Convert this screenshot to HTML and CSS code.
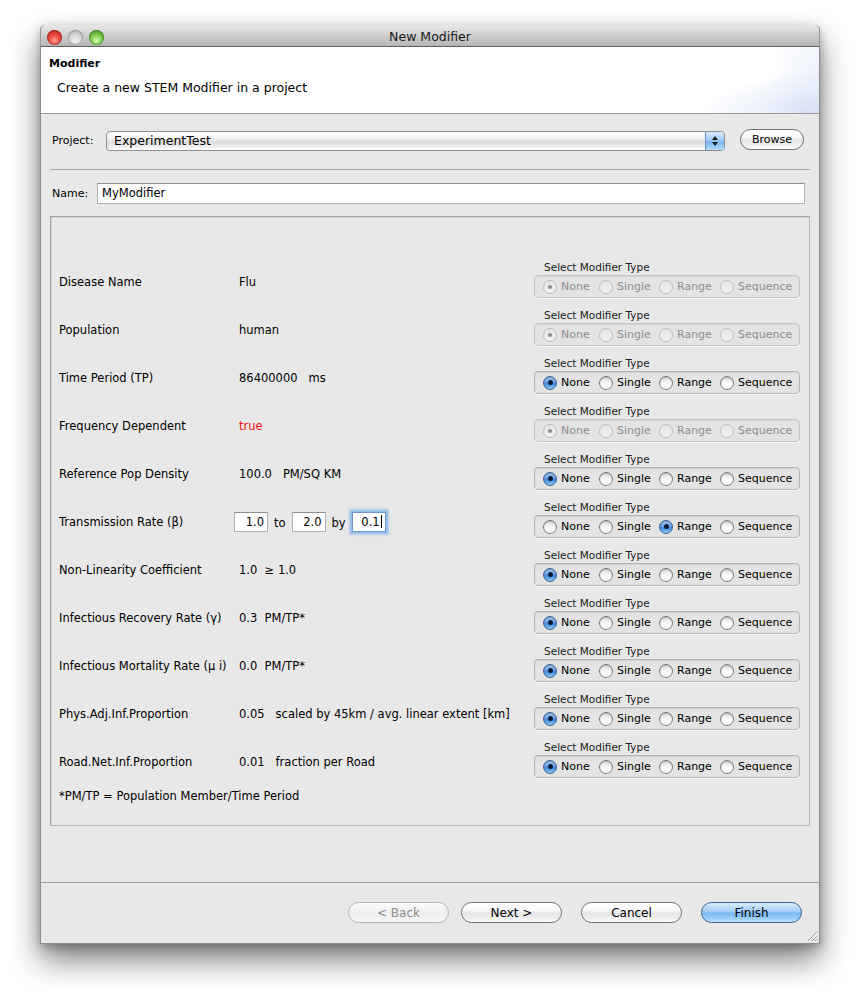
FILE: index.html
```html
<!DOCTYPE html>
<html>
<head>
<meta charset="utf-8">
<title>New Modifier</title>
<link rel="stylesheet" href="styles.css">
</head>
<body>
<div class="window">
  <div class="titlebar">
    <div class="lights">
      <span class="light red"></span><span class="light gray"></span><span class="light green"></span>
    </div>
    <div class="title">New Modifier</div>
    <div></div>
  </div>
  <div class="header">
    <div class="h-title">Modifier</div>
    <div class="h-desc">Create a new STEM Modifier in a project</div>
  </div>
  <div class="body">
    <div class="project-row">
      <span class="lbl proj-lbl">Project:</span>
      <div class="combo">
        <span class="combo-text">ExperimentTest</span>
        <span class="stepper">
          <svg width="8" height="12" viewBox="0 0 8 12"><path d="M4 1 L7 5 L1 5 Z" fill="#1a1a1a"/><path d="M4 11 L7 7 L1 7 Z" fill="#1a1a1a"/></svg>
        </span>
      </div>
      <span class="btn browse">Browse</span>
    </div>
    <div class="sep"></div>
    <div class="name-row">
      <span class="lbl name-lbl">Name:</span>
      <div class="field">MyModifier</div>
    </div>
    <div class="group">
      <div class="row">
        <div class="cell">Disease Name</div>
        <div class="cell val">Flu</div>
        <div class="rcell">
          <div class="rlabel">Select Modifier Type</div>
          <div class="rbox disabled">
            <span class="ritem w1"><span class="radio on"></span>None</span>
            <span class="ritem w2"><span class="radio"></span>Single</span>
            <span class="ritem w3"><span class="radio"></span>Range</span>
            <span class="ritem"><span class="radio"></span>Sequence</span>
          </div>
        </div>
      </div>
      <div class="row">
        <div class="cell">Population</div>
        <div class="cell val">human</div>
        <div class="rcell">
          <div class="rlabel">Select Modifier Type</div>
          <div class="rbox disabled">
            <span class="ritem w1"><span class="radio on"></span>None</span>
            <span class="ritem w2"><span class="radio"></span>Single</span>
            <span class="ritem w3"><span class="radio"></span>Range</span>
            <span class="ritem"><span class="radio"></span>Sequence</span>
          </div>
        </div>
      </div>
      <div class="row">
        <div class="cell">Time Period (TP)</div>
        <div class="cell val">86400000   ms</div>
        <div class="rcell">
          <div class="rlabel">Select Modifier Type</div>
          <div class="rbox">
            <span class="ritem w1"><span class="radio on"></span>None</span>
            <span class="ritem w2"><span class="radio"></span>Single</span>
            <span class="ritem w3"><span class="radio"></span>Range</span>
            <span class="ritem"><span class="radio"></span>Sequence</span>
          </div>
        </div>
      </div>
      <div class="row">
        <div class="cell">Frequency Dependent</div>
        <div class="cell val red">true</div>
        <div class="rcell">
          <div class="rlabel">Select Modifier Type</div>
          <div class="rbox disabled">
            <span class="ritem w1"><span class="radio on"></span>None</span>
            <span class="ritem w2"><span class="radio"></span>Single</span>
            <span class="ritem w3"><span class="radio"></span>Range</span>
            <span class="ritem"><span class="radio"></span>Sequence</span>
          </div>
        </div>
      </div>
      <div class="row">
        <div class="cell">Reference Pop Density</div>
        <div class="cell val">100.0   PM/SQ KM</div>
        <div class="rcell">
          <div class="rlabel">Select Modifier Type</div>
          <div class="rbox">
            <span class="ritem w1"><span class="radio on"></span>None</span>
            <span class="ritem w2"><span class="radio"></span>Single</span>
            <span class="ritem w3"><span class="radio"></span>Range</span>
            <span class="ritem"><span class="radio"></span>Sequence</span>
          </div>
        </div>
      </div>
      <div class="row">
        <div class="cell">Transmission Rate (β)</div>
        <div class="cell val inputs">
          <span class="num">1.0</span><span class="word">to</span><span class="num">2.0</span><span class="word">by</span><span class="num focus">0.1<span class="caret"></span></span>
        </div>
        <div class="rcell">
          <div class="rlabel">Select Modifier Type</div>
          <div class="rbox">
            <span class="ritem w1"><span class="radio"></span>None</span>
            <span class="ritem w2"><span class="radio"></span>Single</span>
            <span class="ritem w3"><span class="radio on"></span>Range</span>
            <span class="ritem"><span class="radio"></span>Sequence</span>
          </div>
        </div>
      </div>
      <div class="row">
        <div class="cell">Non-Linearity Coefficient</div>
        <div class="cell val">1.0  ≥ 1.0</div>
        <div class="rcell">
          <div class="rlabel">Select Modifier Type</div>
          <div class="rbox">
            <span class="ritem w1"><span class="radio on"></span>None</span>
            <span class="ritem w2"><span class="radio"></span>Single</span>
            <span class="ritem w3"><span class="radio"></span>Range</span>
            <span class="ritem"><span class="radio"></span>Sequence</span>
          </div>
        </div>
      </div>
      <div class="row">
        <div class="cell">Infectious Recovery Rate (γ)</div>
        <div class="cell val">0.3  PM/TP*</div>
        <div class="rcell">
          <div class="rlabel">Select Modifier Type</div>
          <div class="rbox">
            <span class="ritem w1"><span class="radio on"></span>None</span>
            <span class="ritem w2"><span class="radio"></span>Single</span>
            <span class="ritem w3"><span class="radio"></span>Range</span>
            <span class="ritem"><span class="radio"></span>Sequence</span>
          </div>
        </div>
      </div>
      <div class="row">
        <div class="cell">Infectious Mortality Rate (μ i)</div>
        <div class="cell val">0.0  PM/TP*</div>
        <div class="rcell">
          <div class="rlabel">Select Modifier Type</div>
          <div class="rbox">
            <span class="ritem w1"><span class="radio on"></span>None</span>
            <span class="ritem w2"><span class="radio"></span>Single</span>
            <span class="ritem w3"><span class="radio"></span>Range</span>
            <span class="ritem"><span class="radio"></span>Sequence</span>
          </div>
        </div>
      </div>
      <div class="row">
        <div class="cell">Phys.Adj.Inf.Proportion</div>
        <div class="cell val">0.05   scaled by 45km / avg. linear extent [km]</div>
        <div class="rcell">
          <div class="rlabel">Select Modifier Type</div>
          <div class="rbox">
            <span class="ritem w1"><span class="radio on"></span>None</span>
            <span class="ritem w2"><span class="radio"></span>Single</span>
            <span class="ritem w3"><span class="radio"></span>Range</span>
            <span class="ritem"><span class="radio"></span>Sequence</span>
          </div>
        </div>
      </div>
      <div class="row">
        <div class="cell">Road.Net.Inf.Proportion</div>
        <div class="cell val">0.01   fraction per Road</div>
        <div class="rcell">
          <div class="rlabel">Select Modifier Type</div>
          <div class="rbox">
            <span class="ritem w1"><span class="radio on"></span>None</span>
            <span class="ritem w2"><span class="radio"></span>Single</span>
            <span class="ritem w3"><span class="radio"></span>Range</span>
            <span class="ritem"><span class="radio"></span>Sequence</span>
          </div>
        </div>
      </div>
      <div class="footnote">*PM/TP = Population Member/Time Period</div>
    </div>
  </div>
  <div class="footer">
    <span class="btn fbtn disabled-btn">&lt; Back</span>
    <span class="btn fbtn next">Next &gt;</span>
    <span class="btn fbtn cancel">Cancel</span>
    <span class="btn fbtn finish">Finish</span>
  </div>
  <svg class="grip" width="11" height="11" viewBox="0 0 11 11">
    <path d="M10 1 L1 10 M10 5 L5 10 M10 8 L8 10" stroke="#9a9a9a" stroke-width="1" fill="none"/>
    <path d="M10 2 L2 10 M10 6 L6 10" stroke="#ffffff" stroke-width="1" fill="none" opacity="0.8"/>
  </svg>
</div>
</body>
</html>
```

FILE: styles.css
```css
* { box-sizing: border-box; }
html, body { margin: 0; padding: 0; background: #ffffff; }
body {
  font-family: "DejaVu Sans", "Liberation Sans", sans-serif;
  font-size: 11.5px;
  color: #000;
  min-height: 999px;
  padding: 25px 0 55px 40px;
}

.window {
  position: relative;
  width: 780px;
  height: 919px;
  border: 1px solid #8c8c8c;
  border-top: none;
  border-radius: 5px 5px 0 0;
  background: #e8e8e8;
  box-shadow: 0 16px 30px rgba(0,0,0,0.5), 0 3px 10px rgba(0,0,0,0.25);
  display: flex;
  flex-direction: column;
}

/* title bar */
.titlebar {
  height: 22px;
  flex-shrink: 0;
  display: grid;
  grid-template-columns: 1fr auto 1fr;
  align-items: center;
  border-radius: 5px 5px 0 0;
  background: linear-gradient(#e8e8e8, #c9c9c9 60%, #b5b5b5);
  border-bottom: 1px solid #5f5f5f;
  margin: 0 -1px;
  border-left: 1px solid #9a9a9a;
  border-right: 1px solid #9a9a9a;
}
.lights {
  display: flex;
  gap: 6px;
  padding-left: 6px;
  padding-top: 3px;
}
.light {
  width: 15px;
  height: 15px;
  border-radius: 50%;
  display: block;
}
.light.red {
  background: radial-gradient(circle at 50% 70%, #ff9a8f 0%, #e8453c 45%, #b51c12 100%);
  box-shadow: inset 0 0 0 1px rgba(120,20,10,0.45);
}
.light.gray {
  background: radial-gradient(circle at 50% 70%, #f2f2f2 0%, #d2d2d2 50%, #a9a9a9 100%);
  box-shadow: inset 0 0 0 1px rgba(0,0,0,0.22);
}
.light.green {
  background: radial-gradient(circle at 50% 70%, #d6ffb0 0%, #7cc84a 45%, #3f8a17 100%);
  box-shadow: inset 0 0 0 1px rgba(30,90,10,0.45);
}
.title {
  font-size: 12.5px;
  color: #1a1a1a;
  padding-top: 2px;
}

/* header */
.header {
  height: 67px;
  flex-shrink: 0;
  border-bottom: 1px solid #9a9a9a;
  background:
    radial-gradient(ellipse 150px 60px at 100% 110%, rgba(205,218,243,0.8), rgba(225,233,249,0.45) 55%, rgba(255,255,255,0) 80%),
    radial-gradient(ellipse 70px 120px at 100% 80%, rgba(215,226,246,0.6), rgba(255,255,255,0) 75%),
    #ffffff;
  padding: 10px 8px 0 8px;
}
.h-title {
  font-weight: bold;
  font-size: 11px;
  line-height: 14px;
}
.h-desc {
  font-size: 12.5px;
  line-height: 15px;
  margin-top: 9px;
  padding-left: 8px;
}

/* body */
.body {
  flex: 1;
  padding: 15px 9px 0 9px;
}
.lbl {
  font-size: 11px;
  line-height: 20px;
}
.project-row {
  display: flex;
  align-items: flex-start;
  height: 22px;
}
.proj-lbl {
  width: 54px;
  margin-left: 2px;
  margin-top: 2px;
}
.combo {
  width: 619px;
  height: 20px;
  margin-top: 2px;
  border: 1px solid #8e8e8e;
  border-radius: 4px;
  background: linear-gradient(#ffffff 0%, #f4f4f4 35%, #dcdcdc 55%, #eeeeee 80%, #ffffff 100%);
  display: flex;
  align-items: center;
  justify-content: space-between;
  overflow: hidden;
}
.combo-text {
  font-size: 12.5px;
  padding-left: 7px;
  line-height: 18px;
}
.stepper {
  width: 19px;
  height: 18px;
  border-left: 1px solid #6c8fc0;
  background: linear-gradient(#d4e9fd 0%, #a3cdf6 45%, #7ab6f0 55%, #b4dcfd 100%);
  display: flex;
  align-items: center;
  justify-content: center;
}
.btn {
  display: flex;
  align-items: center;
  justify-content: center;
  height: 21px;
  border: 1px solid #6f6f6f;
  border-radius: 11px;
  background: linear-gradient(#ffffff 0%, #f7f7f7 40%, #e6e6e6 55%, #f2f2f2 85%, #ffffff 100%);
  color: #000;
}
.browse {
  width: 64px;
  margin-left: 15px;
  font-size: 11px;
}

.sep {
  margin-top: 18px;
  border-top: 1px solid #a9a9a9;
}

.name-row {
  display: flex;
  margin-top: 13px;
  height: 21px;
}
.name-lbl {
  width: 45px;
  margin-left: 2px;
  line-height: 21px;
}
.field {
  flex: 1;
  margin-right: 5px;
  height: 21px;
  background: #fff;
  border: 1px solid #b2b2b2;
  border-top-color: #8e8e8e;
  font-size: 11.5px;
  line-height: 19px;
  padding-left: 4px;
}

/* group */
.group {
  margin-top: 12px;
  height: 610px;
  border: 1px solid #a3a3a3;
  border-right-color: #b5b5b5;
  border-bottom-color: #b5b5b5;
  box-shadow: inset 1px 1px 0 #d4d4d4;
  padding: 40px 9px 0 8px;
}
.row {
  display: grid;
  grid-template-columns: 180px 295px 266px;
  height: 48px;
}
.cell {
  margin-top: 11px;
  height: 27px;
  display: flex;
  align-items: center;
  white-space: pre;
}
.val.red { color: #f01414; }
.inputs { margin-left: -5px; }
.num {
  width: 34px;
  height: 20px;
  background: #fff;
  border: 1px solid #b0b0b0;
  border-top-color: #8f8f8f;
  text-align: right;
  line-height: 18px;
  padding-right: 3px;
  display: block;
}
.num.focus {
  border-color: #6f95c9;
  box-shadow: 0 0 0 2px #9cc0ea, 0 0 2px 3px rgba(140,180,230,0.5);
}
.caret {
  display: inline-block;
  width: 1px;
  height: 13px;
  background: #000;
  vertical-align: -2px;
  margin-left: 1px;
}
.word { margin: 0 6px; padding-top: 3px; }

.rcell {
  padding-top: 4px;
}
.rlabel {
  font-size: 10.5px;
  line-height: 12px;
  padding-left: 10px;
  color: #1a1a1a;
}
.rbox {
  margin-top: 2px;
  height: 23px;
  border: 1px solid #b4b4b4;
  border-radius: 4px;
  background: #e3e3e3;
  box-shadow: inset 0 1px 1px rgba(0,0,0,0.06), 0 1px 0 rgba(255,255,255,0.7);
  display: flex;
  align-items: center;
  padding-left: 8px;
  font-size: 11px;
}
.ritem {
  display: flex;
  align-items: center;
}
.ritem.w1 { width: 56px; }
.ritem.w2 { width: 60px; }
.ritem.w3 { width: 61px; }
.radio {
  width: 14px;
  height: 14px;
  border-radius: 50%;
  margin-right: 4px;
  border: 1px solid #7b7b7b;
  background: linear-gradient(#dcdcdc 0%, #f6f6f6 45%, #ffffff 100%);
  box-shadow: inset 0 1px 1px rgba(0,0,0,0.18);
  display: flex;
  align-items: center;
  justify-content: center;
}
.radio.on {
  border-color: #3d5f93;
  background: linear-gradient(#a8cdf5 0%, #6aa6ea 45%, #3f87dd 55%, #90c8f8 100%);
  box-shadow: inset 0 1px 1px rgba(0,0,0,0.25);
}
.radio.on::after {
  content: "";
  width: 5px;
  height: 5px;
  border-radius: 50%;
  background: #0c1a33;
}
.rbox.disabled {
  color: #8d8d8d;
  border-color: #c4c4c4;
}
.rbox.disabled .radio {
  border-color: #bdbdbd;
  background: linear-gradient(#e4e4e4, #f3f3f3);
  box-shadow: none;
}
.rbox.disabled .radio.on::after {
  background: #8c8c8c;
  width: 4px;
  height: 4px;
}

.footnote {
  margin-top: 4px;
  line-height: 14px;
}

/* footer */
.footer {
  height: 61px;
  flex-shrink: 0;
  border-top: 1px solid #a0a0a0;
  display: flex;
  justify-content: flex-end;
  align-items: flex-start;
  padding: 19px 17px 0 0;
}
.fbtn {
  width: 101px;
  font-size: 12px;
}
.fbtn.next { margin-left: 12px; }
.fbtn.cancel { margin-left: 19px; }
.fbtn.finish {
  margin-left: 19px;
  border-color: #3b5f9a;
  background: linear-gradient(#d9ecfd 0%, #a9d2f8 40%, #7cb8f2 55%, #9fd0fa 85%, #c9e6fd 100%);
}
.disabled-btn {
  color: #8a8a8a;
  border-color: #b4b4b4;
  background: linear-gradient(#fafafa, #efefef 55%, #f6f6f6);
}

.grip {
  position: absolute;
  right: 1px;
  bottom: 1px;
}
```
